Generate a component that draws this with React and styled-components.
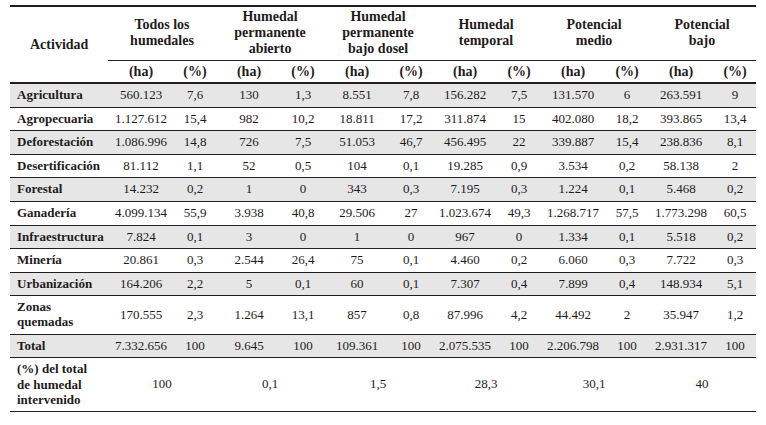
import React from 'react';
import styled, { createGlobalStyle } from 'styled-components';

const GlobalStyle = createGlobalStyle`
  body {
    margin: 0;
    background: #ffffff;
    font-family: "Liberation Serif", "Times New Roman", serif;
    color: #1f1b1c;
  }
`;

const Page = styled.div`
  padding: 5px 10px 0 10px;
`;

const Table = styled.table`
  width: 746px;
  border-collapse: collapse;
  table-layout: fixed;
  border-top: 2px solid #231f20;
  font-family: "Liberation Serif", "Times New Roman", serif;
  font-size: 13px;
  color: #1f1b1c;
`;

const HeadCell = styled.th`
  font-weight: bold;
  font-size: 14px;
  text-align: ${(p) => (p.$left ? 'left' : 'center')};
  vertical-align: middle;
  line-height: 16px;
  padding: ${(p) => (p.$left ? '0 0 0 20px' : '2px 2px 3px 2px')};
  border-bottom: ${(p) => (p.$line ? '1.5px solid #231f20' : 'none')};
`;

const SubHead = styled.th`
  font-weight: bold;
  font-size: 14px;
  text-align: center;
  line-height: 15px;
  padding: 3px 2px 3px 2px;
`;

const HeadRow = styled.tr`
  border-bottom: ${(p) => (p.$last ? '2px solid #231f20' : 'none')};
`;

const Row = styled.tr`
  background: ${(p) => (p.$shaded ? '#e6e6e6' : '#ffffff')};
  border-bottom: ${(p) => (p.$strong ? '1.5px' : '1px')} solid #231f20;
`;

const LabelCell = styled.td`
  font-weight: bold;
  text-align: left;
  vertical-align: middle;
  line-height: ${(p) => (p.$tall ? '15.5px' : '14.6px')};
  padding: ${(p) => (p.$tall ? '3px 4px 3px 7px' : '4px 4px 4px 7px')};
`;

const NumCell = styled.td`
  text-align: center;
  vertical-align: middle;
  line-height: 14.6px;
  padding: 4px 2px;
  white-space: nowrap;
`;

const groups = [
  ['Todos los', 'humedales'],
  ['Humedal', 'permanente', 'abierto'],
  ['Humedal', 'permanente', 'bajo dosel'],
  ['Humedal', 'temporal'],
  ['Potencial', 'medio'],
  ['Potencial', 'bajo'],
];

const rows = [
  [['Agricultura'], '560.123', '7,6', '130', '1,3', '8.551', '7,8', '156.282', '7,5', '131.570', '6', '263.591', '9'],
  [['Agropecuaria'], '1.127.612', '15,4', '982', '10,2', '18.811', '17,2', '311.874', '15', '402.080', '18,2', '393.865', '13,4'],
  [['Deforestación'], '1.086.996', '14,8', '726', '7,5', '51.053', '46,7', '456.495', '22', '339.887', '15,4', '238.836', '8,1'],
  [['Desertificación'], '81.112', '1,1', '52', '0,5', '104', '0,1', '19.285', '0,9', '3.534', '0,2', '58.138', '2'],
  [['Forestal'], '14.232', '0,2', '1', '0', '343', '0,3', '7.195', '0,3', '1.224', '0,1', '5.468', '0,2'],
  [['Ganadería'], '4.099.134', '55,9', '3.938', '40,8', '29.506', '27', '1.023.674', '49,3', '1.268.717', '57,5', '1.773.298', '60,5'],
  [['Infraestructura'], '7.824', '0,1', '3', '0', '1', '0', '967', '0', '1.334', '0,1', '5.518', '0,2'],
  [['Minería'], '20.861', '0,3', '2.544', '26,4', '75', '0,1', '4.460', '0,2', '6.060', '0,3', '7.722', '0,3'],
  [['Urbanización'], '164.206', '2,2', '5', '0,1', '60', '0,1', '7.307', '0,4', '7.899', '0,4', '148.934', '5,1'],
  [['Zonas', 'quemadas'], '170.555', '2,3', '1.264', '13,1', '857', '0,8', '87.996', '4,2', '44.492', '2', '35.947', '1,2'],
  [['Total'], '7.332.656', '100', '9.645', '100', '109.361', '100', '2.075.535', '100', '2.206.798', '100', '2.931.317', '100'],
];

const share = ['100', '0,1', '1,5', '28,3', '30,1', '40'];

// texto en varias lineas con <br/>
const lines = (arr) =>
  arr.map((t, i) => (
    <React.Fragment key={i}>
      {i > 0 && <br />}
      {t}
    </React.Fragment>
  ));

export default function App() {
  return (
    <Page>
      <GlobalStyle />
      <Table>
        <colgroup>
          <col style={{ width: 98 }} />
          {groups.map((g, i) => (
            <React.Fragment key={i}>
              <col style={{ width: 66 }} />
              <col style={{ width: 42 }} />
            </React.Fragment>
          ))}
        </colgroup>
        <thead>
          <HeadRow>
            <HeadCell $left rowSpan={2}>Actividad</HeadCell>
            {groups.map((g, i) => (
              <HeadCell key={i} colSpan={2} $line>{lines(g)}</HeadCell>
            ))}
          </HeadRow>
          <HeadRow $last>
            {groups.map((g, i) => (
              <React.Fragment key={i}>
                <SubHead>(ha)</SubHead>
                <SubHead>(%)</SubHead>
              </React.Fragment>
            ))}
          </HeadRow>
        </thead>
        <tbody>
          {rows.map((r, i) => (
            <Row key={i} $shaded={i % 2 === 0} $strong={i >= 9}>
              <LabelCell>{lines(r[0])}</LabelCell>
              {r.slice(1).map((v, j) => (
                <NumCell key={j}>{v}</NumCell>
              ))}
            </Row>
          ))}
          <Row $strong>
            <LabelCell $tall>{lines(['(%) del total', 'de humedal', 'intervenido'])}</LabelCell>
            {share.map((v, j) => (
              <NumCell key={j} colSpan={2}>{v}</NumCell>
            ))}
          </Row>
        </tbody>
      </Table>
    </Page>
  );
}
